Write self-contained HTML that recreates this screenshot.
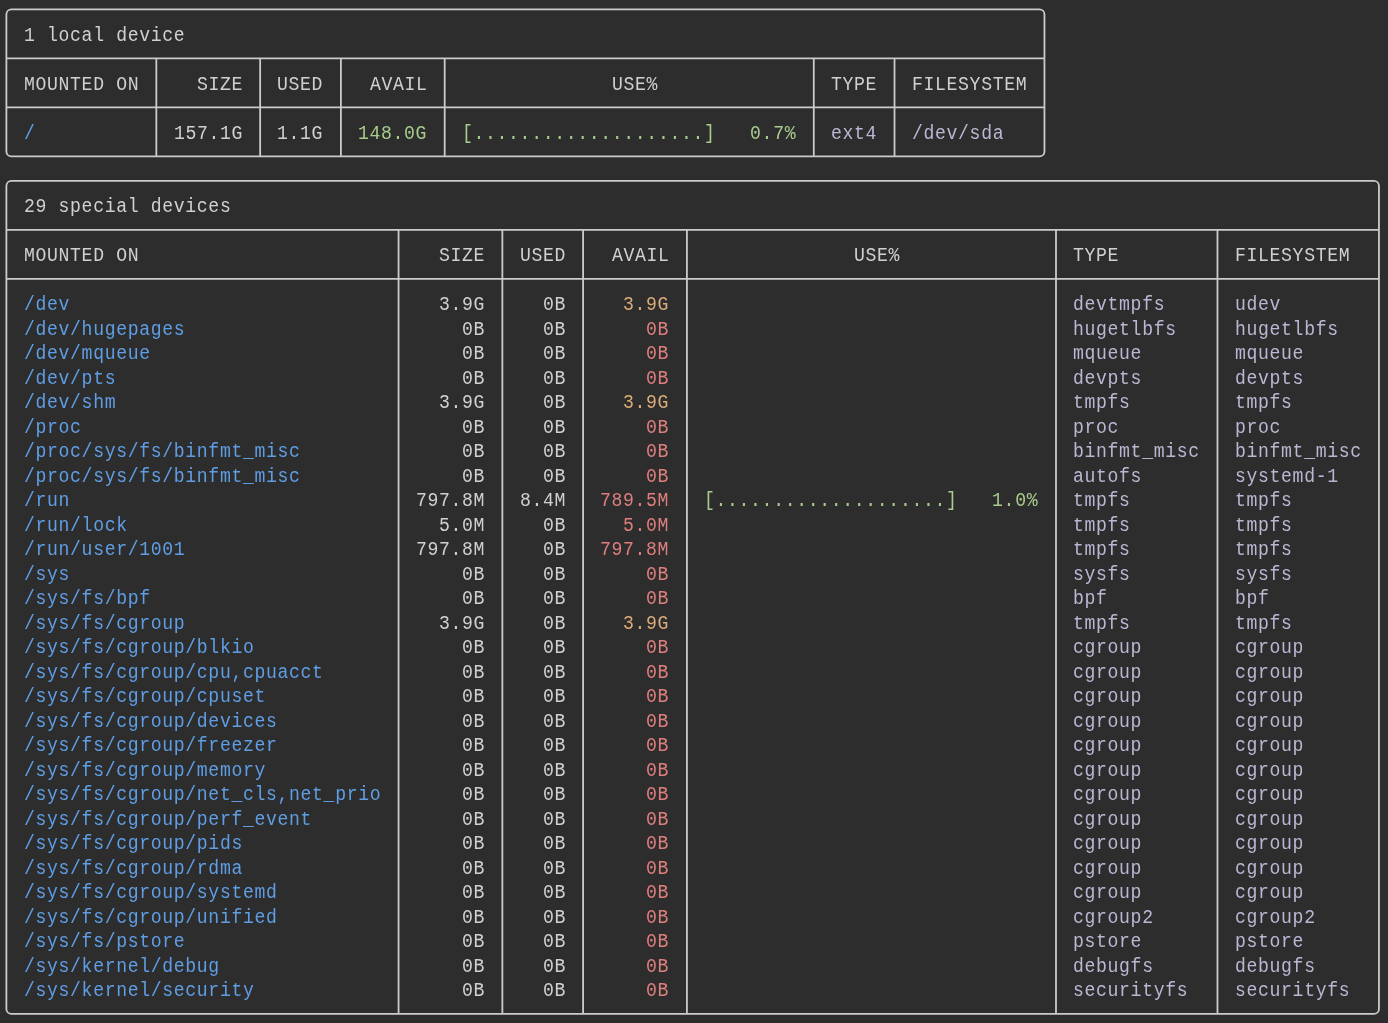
<!DOCTYPE html>
<html><head><meta charset="utf-8"><title>duf</title>
<style>
html,body{margin:0;padding:0;}
body{width:1388px;height:1023px;overflow:hidden;background:#2d2d2d;position:relative;
font-family:"Liberation Mono",monospace;font-size:19.3px;line-height:24.5px;color:#d0d0d0;}
.t{position:absolute;white-space:pre;transform-origin:0 0;transform:scaleX(0.94);letter-spacing:0.6883px;}
#txt{position:absolute;left:0;top:0;width:1388px;height:1023px;will-change:transform;}
.b{color:#5f9ee4;} .g{color:#a8cc8c;} .y{color:#dbab79;} .r{color:#de7e7d;} .k{color:#bab7d3;}
svg{position:absolute;left:0;top:0;}
</style></head><body>
<svg width="1388" height="1023" viewBox="0 0 1388 1023" fill="none" stroke="#cbcbcb" stroke-width="1.8">
<rect x="6.40" y="9.40" width="1038.06" height="147.00" rx="5" ry="5"/><line x1="6.40" y1="58.40" x2="1044.46" y2="58.40"/><line x1="6.40" y1="107.40" x2="1044.46" y2="107.40"/><line x1="156.34" y1="58.40" x2="156.34" y2="156.40"/><line x1="260.15" y1="58.40" x2="260.15" y2="156.40"/><line x1="340.89" y1="58.40" x2="340.89" y2="156.40"/><line x1="444.69" y1="58.40" x2="444.69" y2="156.40"/><line x1="813.78" y1="58.40" x2="813.78" y2="156.40"/><line x1="894.52" y1="58.40" x2="894.52" y2="156.40"/><rect x="6.40" y="180.90" width="1372.55" height="833.00" rx="5" ry="5"/><line x1="6.40" y1="229.90" x2="1378.95" y2="229.90"/><line x1="6.40" y1="278.90" x2="1378.95" y2="278.90"/><line x1="398.56" y1="229.90" x2="398.56" y2="1013.90"/><line x1="502.36" y1="229.90" x2="502.36" y2="1013.90"/><line x1="583.10" y1="229.90" x2="583.10" y2="1013.90"/><line x1="686.91" y1="229.90" x2="686.91" y2="1013.90"/><line x1="1055.99" y1="229.90" x2="1055.99" y2="1013.90"/><line x1="1217.47" y1="229.90" x2="1217.47" y2="1013.90"/></svg>
<div id="txt">
<div class="t " style="left:23.62px;top:23.60px">1 local device</div>
<div class="t " style="left:23.62px;top:72.60px">MOUNTED ON</div>
<div class="t " style="left:196.63px;top:72.60px">SIZE</div>
<div class="t " style="left:277.37px;top:72.60px">USED</div>
<div class="t " style="left:369.64px;top:72.60px">AVAIL</div>
<div class="t " style="left:611.86px;top:72.60px">USE%</div>
<div class="t " style="left:831.00px;top:72.60px">TYPE</div>
<div class="t " style="left:911.74px;top:72.60px">FILESYSTEM</div>
<div class="t b" style="left:23.62px;top:121.60px">/</div>
<div class="t " style="left:173.57px;top:121.60px">157.1G</div>
<div class="t " style="left:277.37px;top:121.60px">1.1G</div>
<div class="t g" style="left:358.11px;top:121.60px">148.0G</div>
<div class="t g" style="left:461.92px;top:121.60px">[....................]   0.7%</div>
<div class="t k" style="left:831.00px;top:121.60px">ext4</div>
<div class="t k" style="left:911.74px;top:121.60px">/dev/sda</div>
<div class="t " style="left:23.62px;top:195.10px">29 special devices</div>
<div class="t " style="left:23.62px;top:244.10px">MOUNTED ON</div>
<div class="t " style="left:438.85px;top:244.10px">SIZE</div>
<div class="t " style="left:519.59px;top:244.10px">USED</div>
<div class="t " style="left:611.86px;top:244.10px">AVAIL</div>
<div class="t " style="left:854.07px;top:244.10px">USE%</div>
<div class="t " style="left:1073.22px;top:244.10px">TYPE</div>
<div class="t " style="left:1234.69px;top:244.10px">FILESYSTEM</div>
<div class="t b" style="left:23.62px;top:293.10px">/dev</div>
<div class="t " style="left:438.85px;top:293.10px">3.9G</div>
<div class="t " style="left:542.65px;top:293.10px">0B</div>
<div class="t y" style="left:623.39px;top:293.10px">3.9G</div>
<div class="t k" style="left:1073.22px;top:293.10px">devtmpfs</div>
<div class="t k" style="left:1234.69px;top:293.10px">udev</div>
<div class="t b" style="left:23.62px;top:317.60px">/dev/hugepages</div>
<div class="t " style="left:461.92px;top:317.60px">0B</div>
<div class="t " style="left:542.65px;top:317.60px">0B</div>
<div class="t r" style="left:646.46px;top:317.60px">0B</div>
<div class="t k" style="left:1073.22px;top:317.60px">hugetlbfs</div>
<div class="t k" style="left:1234.69px;top:317.60px">hugetlbfs</div>
<div class="t b" style="left:23.62px;top:342.10px">/dev/mqueue</div>
<div class="t " style="left:461.92px;top:342.10px">0B</div>
<div class="t " style="left:542.65px;top:342.10px">0B</div>
<div class="t r" style="left:646.46px;top:342.10px">0B</div>
<div class="t k" style="left:1073.22px;top:342.10px">mqueue</div>
<div class="t k" style="left:1234.69px;top:342.10px">mqueue</div>
<div class="t b" style="left:23.62px;top:366.60px">/dev/pts</div>
<div class="t " style="left:461.92px;top:366.60px">0B</div>
<div class="t " style="left:542.65px;top:366.60px">0B</div>
<div class="t r" style="left:646.46px;top:366.60px">0B</div>
<div class="t k" style="left:1073.22px;top:366.60px">devpts</div>
<div class="t k" style="left:1234.69px;top:366.60px">devpts</div>
<div class="t b" style="left:23.62px;top:391.10px">/dev/shm</div>
<div class="t " style="left:438.85px;top:391.10px">3.9G</div>
<div class="t " style="left:542.65px;top:391.10px">0B</div>
<div class="t y" style="left:623.39px;top:391.10px">3.9G</div>
<div class="t k" style="left:1073.22px;top:391.10px">tmpfs</div>
<div class="t k" style="left:1234.69px;top:391.10px">tmpfs</div>
<div class="t b" style="left:23.62px;top:415.60px">/proc</div>
<div class="t " style="left:461.92px;top:415.60px">0B</div>
<div class="t " style="left:542.65px;top:415.60px">0B</div>
<div class="t r" style="left:646.46px;top:415.60px">0B</div>
<div class="t k" style="left:1073.22px;top:415.60px">proc</div>
<div class="t k" style="left:1234.69px;top:415.60px">proc</div>
<div class="t b" style="left:23.62px;top:440.10px">/proc/sys/fs/binfmt_misc</div>
<div class="t " style="left:461.92px;top:440.10px">0B</div>
<div class="t " style="left:542.65px;top:440.10px">0B</div>
<div class="t r" style="left:646.46px;top:440.10px">0B</div>
<div class="t k" style="left:1073.22px;top:440.10px">binfmt_misc</div>
<div class="t k" style="left:1234.69px;top:440.10px">binfmt_misc</div>
<div class="t b" style="left:23.62px;top:464.60px">/proc/sys/fs/binfmt_misc</div>
<div class="t " style="left:461.92px;top:464.60px">0B</div>
<div class="t " style="left:542.65px;top:464.60px">0B</div>
<div class="t r" style="left:646.46px;top:464.60px">0B</div>
<div class="t k" style="left:1073.22px;top:464.60px">autofs</div>
<div class="t k" style="left:1234.69px;top:464.60px">systemd-1</div>
<div class="t b" style="left:23.62px;top:489.10px">/run</div>
<div class="t " style="left:415.78px;top:489.10px">797.8M</div>
<div class="t " style="left:519.59px;top:489.10px">8.4M</div>
<div class="t r" style="left:600.32px;top:489.10px">789.5M</div>
<div class="t g" style="left:704.13px;top:489.10px">[....................]   1.0%</div>
<div class="t k" style="left:1073.22px;top:489.10px">tmpfs</div>
<div class="t k" style="left:1234.69px;top:489.10px">tmpfs</div>
<div class="t b" style="left:23.62px;top:513.60px">/run/lock</div>
<div class="t " style="left:438.85px;top:513.60px">5.0M</div>
<div class="t " style="left:542.65px;top:513.60px">0B</div>
<div class="t r" style="left:623.39px;top:513.60px">5.0M</div>
<div class="t k" style="left:1073.22px;top:513.60px">tmpfs</div>
<div class="t k" style="left:1234.69px;top:513.60px">tmpfs</div>
<div class="t b" style="left:23.62px;top:538.10px">/run/user/1001</div>
<div class="t " style="left:415.78px;top:538.10px">797.8M</div>
<div class="t " style="left:542.65px;top:538.10px">0B</div>
<div class="t r" style="left:600.32px;top:538.10px">797.8M</div>
<div class="t k" style="left:1073.22px;top:538.10px">tmpfs</div>
<div class="t k" style="left:1234.69px;top:538.10px">tmpfs</div>
<div class="t b" style="left:23.62px;top:562.60px">/sys</div>
<div class="t " style="left:461.92px;top:562.60px">0B</div>
<div class="t " style="left:542.65px;top:562.60px">0B</div>
<div class="t r" style="left:646.46px;top:562.60px">0B</div>
<div class="t k" style="left:1073.22px;top:562.60px">sysfs</div>
<div class="t k" style="left:1234.69px;top:562.60px">sysfs</div>
<div class="t b" style="left:23.62px;top:587.10px">/sys/fs/bpf</div>
<div class="t " style="left:461.92px;top:587.10px">0B</div>
<div class="t " style="left:542.65px;top:587.10px">0B</div>
<div class="t r" style="left:646.46px;top:587.10px">0B</div>
<div class="t k" style="left:1073.22px;top:587.10px">bpf</div>
<div class="t k" style="left:1234.69px;top:587.10px">bpf</div>
<div class="t b" style="left:23.62px;top:611.60px">/sys/fs/cgroup</div>
<div class="t " style="left:438.85px;top:611.60px">3.9G</div>
<div class="t " style="left:542.65px;top:611.60px">0B</div>
<div class="t y" style="left:623.39px;top:611.60px">3.9G</div>
<div class="t k" style="left:1073.22px;top:611.60px">tmpfs</div>
<div class="t k" style="left:1234.69px;top:611.60px">tmpfs</div>
<div class="t b" style="left:23.62px;top:636.10px">/sys/fs/cgroup/blkio</div>
<div class="t " style="left:461.92px;top:636.10px">0B</div>
<div class="t " style="left:542.65px;top:636.10px">0B</div>
<div class="t r" style="left:646.46px;top:636.10px">0B</div>
<div class="t k" style="left:1073.22px;top:636.10px">cgroup</div>
<div class="t k" style="left:1234.69px;top:636.10px">cgroup</div>
<div class="t b" style="left:23.62px;top:660.60px">/sys/fs/cgroup/cpu,cpuacct</div>
<div class="t " style="left:461.92px;top:660.60px">0B</div>
<div class="t " style="left:542.65px;top:660.60px">0B</div>
<div class="t r" style="left:646.46px;top:660.60px">0B</div>
<div class="t k" style="left:1073.22px;top:660.60px">cgroup</div>
<div class="t k" style="left:1234.69px;top:660.60px">cgroup</div>
<div class="t b" style="left:23.62px;top:685.10px">/sys/fs/cgroup/cpuset</div>
<div class="t " style="left:461.92px;top:685.10px">0B</div>
<div class="t " style="left:542.65px;top:685.10px">0B</div>
<div class="t r" style="left:646.46px;top:685.10px">0B</div>
<div class="t k" style="left:1073.22px;top:685.10px">cgroup</div>
<div class="t k" style="left:1234.69px;top:685.10px">cgroup</div>
<div class="t b" style="left:23.62px;top:709.60px">/sys/fs/cgroup/devices</div>
<div class="t " style="left:461.92px;top:709.60px">0B</div>
<div class="t " style="left:542.65px;top:709.60px">0B</div>
<div class="t r" style="left:646.46px;top:709.60px">0B</div>
<div class="t k" style="left:1073.22px;top:709.60px">cgroup</div>
<div class="t k" style="left:1234.69px;top:709.60px">cgroup</div>
<div class="t b" style="left:23.62px;top:734.10px">/sys/fs/cgroup/freezer</div>
<div class="t " style="left:461.92px;top:734.10px">0B</div>
<div class="t " style="left:542.65px;top:734.10px">0B</div>
<div class="t r" style="left:646.46px;top:734.10px">0B</div>
<div class="t k" style="left:1073.22px;top:734.10px">cgroup</div>
<div class="t k" style="left:1234.69px;top:734.10px">cgroup</div>
<div class="t b" style="left:23.62px;top:758.60px">/sys/fs/cgroup/memory</div>
<div class="t " style="left:461.92px;top:758.60px">0B</div>
<div class="t " style="left:542.65px;top:758.60px">0B</div>
<div class="t r" style="left:646.46px;top:758.60px">0B</div>
<div class="t k" style="left:1073.22px;top:758.60px">cgroup</div>
<div class="t k" style="left:1234.69px;top:758.60px">cgroup</div>
<div class="t b" style="left:23.62px;top:783.10px">/sys/fs/cgroup/net_cls,net_prio</div>
<div class="t " style="left:461.92px;top:783.10px">0B</div>
<div class="t " style="left:542.65px;top:783.10px">0B</div>
<div class="t r" style="left:646.46px;top:783.10px">0B</div>
<div class="t k" style="left:1073.22px;top:783.10px">cgroup</div>
<div class="t k" style="left:1234.69px;top:783.10px">cgroup</div>
<div class="t b" style="left:23.62px;top:807.60px">/sys/fs/cgroup/perf_event</div>
<div class="t " style="left:461.92px;top:807.60px">0B</div>
<div class="t " style="left:542.65px;top:807.60px">0B</div>
<div class="t r" style="left:646.46px;top:807.60px">0B</div>
<div class="t k" style="left:1073.22px;top:807.60px">cgroup</div>
<div class="t k" style="left:1234.69px;top:807.60px">cgroup</div>
<div class="t b" style="left:23.62px;top:832.10px">/sys/fs/cgroup/pids</div>
<div class="t " style="left:461.92px;top:832.10px">0B</div>
<div class="t " style="left:542.65px;top:832.10px">0B</div>
<div class="t r" style="left:646.46px;top:832.10px">0B</div>
<div class="t k" style="left:1073.22px;top:832.10px">cgroup</div>
<div class="t k" style="left:1234.69px;top:832.10px">cgroup</div>
<div class="t b" style="left:23.62px;top:856.60px">/sys/fs/cgroup/rdma</div>
<div class="t " style="left:461.92px;top:856.60px">0B</div>
<div class="t " style="left:542.65px;top:856.60px">0B</div>
<div class="t r" style="left:646.46px;top:856.60px">0B</div>
<div class="t k" style="left:1073.22px;top:856.60px">cgroup</div>
<div class="t k" style="left:1234.69px;top:856.60px">cgroup</div>
<div class="t b" style="left:23.62px;top:881.10px">/sys/fs/cgroup/systemd</div>
<div class="t " style="left:461.92px;top:881.10px">0B</div>
<div class="t " style="left:542.65px;top:881.10px">0B</div>
<div class="t r" style="left:646.46px;top:881.10px">0B</div>
<div class="t k" style="left:1073.22px;top:881.10px">cgroup</div>
<div class="t k" style="left:1234.69px;top:881.10px">cgroup</div>
<div class="t b" style="left:23.62px;top:905.60px">/sys/fs/cgroup/unified</div>
<div class="t " style="left:461.92px;top:905.60px">0B</div>
<div class="t " style="left:542.65px;top:905.60px">0B</div>
<div class="t r" style="left:646.46px;top:905.60px">0B</div>
<div class="t k" style="left:1073.22px;top:905.60px">cgroup2</div>
<div class="t k" style="left:1234.69px;top:905.60px">cgroup2</div>
<div class="t b" style="left:23.62px;top:930.10px">/sys/fs/pstore</div>
<div class="t " style="left:461.92px;top:930.10px">0B</div>
<div class="t " style="left:542.65px;top:930.10px">0B</div>
<div class="t r" style="left:646.46px;top:930.10px">0B</div>
<div class="t k" style="left:1073.22px;top:930.10px">pstore</div>
<div class="t k" style="left:1234.69px;top:930.10px">pstore</div>
<div class="t b" style="left:23.62px;top:954.60px">/sys/kernel/debug</div>
<div class="t " style="left:461.92px;top:954.60px">0B</div>
<div class="t " style="left:542.65px;top:954.60px">0B</div>
<div class="t r" style="left:646.46px;top:954.60px">0B</div>
<div class="t k" style="left:1073.22px;top:954.60px">debugfs</div>
<div class="t k" style="left:1234.69px;top:954.60px">debugfs</div>
<div class="t b" style="left:23.62px;top:979.10px">/sys/kernel/security</div>
<div class="t " style="left:461.92px;top:979.10px">0B</div>
<div class="t " style="left:542.65px;top:979.10px">0B</div>
<div class="t r" style="left:646.46px;top:979.10px">0B</div>
<div class="t k" style="left:1073.22px;top:979.10px">securityfs</div>
<div class="t k" style="left:1234.69px;top:979.10px">securityfs</div>
</div>
</body></html>
